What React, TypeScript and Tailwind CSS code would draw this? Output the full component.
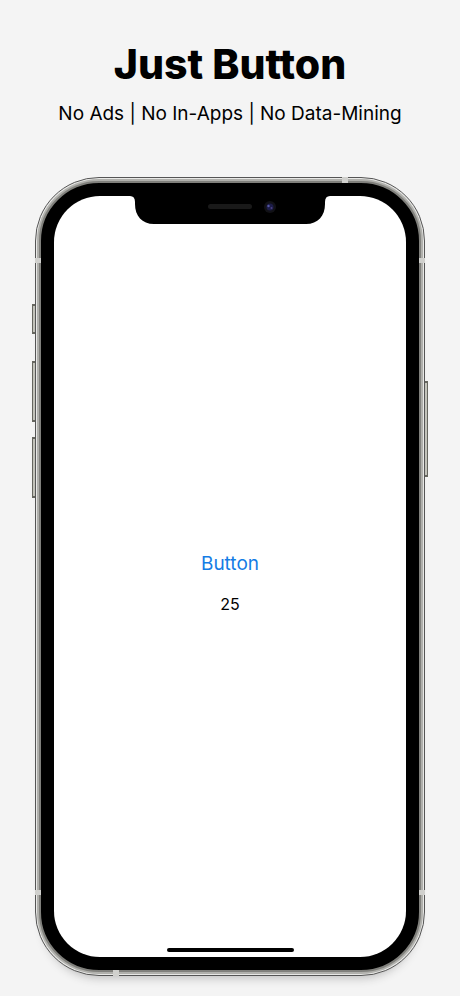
const face = 'font-["Inter","Liberation_Sans",sans-serif]';

function SideKey({ className }: { className: string }) {
  return <span className={`w-full border-y-2 border-l border-[#66665f] bg-[#c4c4bc] ${className}`} />;
}

function AntennaBands() {
  return (
    <div
      aria-hidden="true"
      className="pointer-events-none absolute -inset-px flex flex-col justify-between"
    >
      <div className="flex flex-col gap-[75px]">
        <span className="mr-[77px] h-[6px] w-[6px] self-end bg-[#d0d0cd]" />
        <div className="flex h-[5px] justify-between">
          <span className="w-[6px] bg-[#d0d0cd]" />
          <span className="w-[6px] bg-[#d0d0cd]" />
        </div>
      </div>
      <div className="flex flex-col gap-[75px]">
        <div className="flex h-[5px] justify-between">
          <span className="w-[6px] bg-[#d0d0cd]" />
          <span className="w-[6px] bg-[#d0d0cd]" />
        </div>
        <span className="ml-[78px] h-[6px] w-[6px] bg-[#d0d0cd]" />
      </div>
    </div>
  );
}

function Notch() {
  return (
    <svg aria-hidden="true" viewBox="0 0 204 29" className="-mt-px h-[29px] w-[204px]">
      <path
        d="M0 0H204V1H202Q197 1 197 7V9C197 21 190 29 178 29H26C14 29 7 21 7 9V7Q7 1 2 1H0Z"
        fill="#000"
      />
      <rect x="80" y="9" width="44" height="5" rx="2.5" fill="#191919" />
      <circle cx="142" cy="12" r="6" fill="#111116" />
      <circle cx="142" cy="12" r="3.5" fill="#1c1c48" />
      <circle cx="140.500" cy="11" r="1.200" fill="#5557a5" />
      <circle cx="143.500" cy="13" r="1" fill="#4a3f86" />
    </svg>
  );
}

export default function App() {
  return (
    <main
      className={`flex min-h-screen flex-col overflow-hidden bg-[#f4f4f4] px-8 pb-5 text-black ${face}`}
    >
      <header className="pt-10 text-center whitespace-nowrap">
        <h1 className="text-[41px] leading-12 font-extrabold">Just Button</h1>
        <p className="mt-3 text-[19px] leading-7">No Ads | No In-Apps | No Data-Mining</p>
      </header>

      <div className="mt-[49px] flex grow justify-center">
        <div aria-hidden="true" className="flex w-[3px] flex-col pt-[127px]">
          <SideKey className="h-[30px]" />
          <SideKey className="mt-[27px] h-[61px]" />
          <SideKey className="mt-[15px] h-[61px]" />
        </div>

        <section
          aria-label="Phone"
          className="relative flex max-w-[390px] grow flex-col rounded-[64px] border border-[#555] bg-[#e8e8e6] p-px shadow-[0_10px_10px_-8px_#bbbbbb]"
        >
          <div className="flex grow flex-col rounded-[62px] bg-[#b0b0ac] p-[2px]">
            <div className="flex grow flex-col rounded-[60px] border-2 border-[#80807c] bg-black p-[13px]">
              <div className="flex grow flex-col items-center justify-between rounded-[46px] bg-white pb-[5px]">
                <Notch />
                <div className="flex flex-col items-center gap-[18px] pb-[6px]">
                  <button type="button" className="text-[19px] leading-6 text-[#147ce5]">
                    Button
                  </button>
                  <output className="text-[16px] leading-5">25</output>
                </div>
                <span aria-hidden="true" className="h-1 w-[127px] rounded-full bg-black" />
              </div>
            </div>
          </div>
          <AntennaBands />
        </section>

        <div aria-hidden="true" className="flex w-[3px] flex-col pt-[204px]">
          <span className="h-[96px] w-full border-y-2 border-r border-[#66665f] bg-[#c4c4bc]" />
        </div>
      </div>
    </main>
  );
}
